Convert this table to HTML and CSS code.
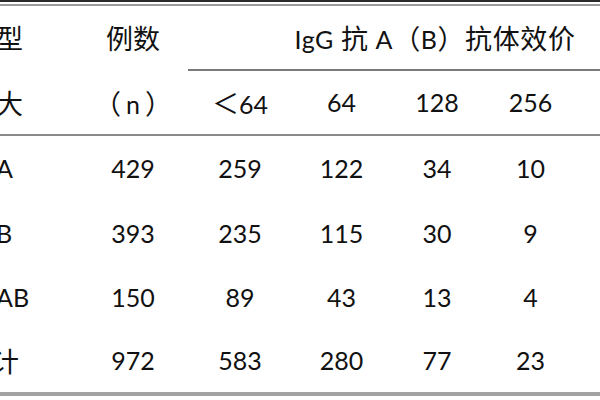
FILE: index.html
```html
<!DOCTYPE html>
<html lang="zh-CN">
<head>
<meta charset="utf-8">
<title>IgG 抗体效价</title>
<link rel="stylesheet" href="styles.css">
</head>
<body>
<div class="sheet">
  <div class="rule-top"></div>
  <div class="grid head">
    <div class="cell c0 r1"><span class="cjk">型</span></div>
    <div class="cell r1"><span class="cjk">例数</span></div>
    <div class="cell title r1"><span class="txt">IgG <span class="cjk">抗</span> A<span class="cjk">（</span>B<span class="cjk">）抗体效价</span></span></div>
    <div class="subrule"></div>
    <div class="cell c0 r3"><span class="cjk">大</span></div>
    <div class="cell r3"><span class="txt"><span class="cjk">（</span><span class="n">n</span><span class="cjk">）</span></span></div>
    <div class="cell r3"><span class="txt"><span class="cjk">＜</span>64</span></div>
    <div class="cell r3">64</div>
    <div class="cell r3">128</div>
    <div class="cell r3">256</div>
  </div>
  <div class="grid body">
    <div class="cell c0">A</div>
    <div class="cell">429</div>
    <div class="cell">259</div>
    <div class="cell">122</div>
    <div class="cell">34</div>
    <div class="cell">10</div>
    <div class="gap"></div>

    <div class="cell c0">B</div>
    <div class="cell">393</div>
    <div class="cell">235</div>
    <div class="cell">115</div>
    <div class="cell">30</div>
    <div class="cell">9</div>
    <div class="gap"></div>

    <div class="cell c0">AB</div>
    <div class="cell">150</div>
    <div class="cell">89</div>
    <div class="cell">43</div>
    <div class="cell">13</div>
    <div class="cell">4</div>
    <div class="gap"></div>

    <div class="cell c0 cut"><span class="cjk">计</span></div>
    <div class="cell">972</div>
    <div class="cell">583</div>
    <div class="cell">280</div>
    <div class="cell">77</div>
    <div class="cell">23</div>
    <div class="gap"></div>
  </div>
</div>
</body>
</html>
```
FILE: styles.css
```css
html, body {
  margin: 0;
  padding: 0;
  background: #ffffff;
}

.sheet {
  width: 600px;
  height: 400px;
  overflow: hidden;
  background: #ffffff;
  color: #111111;
  font-family: Lato, "Noto Sans CJK SC", sans-serif;
  font-size: 25px;
  line-height: 1;
}

.cjk {
  font-family: "Noto Sans CJK SC", sans-serif;
  font-size: 27px;
  font-weight: 400;
}

.n {
  margin: 0 5px;
}

.rule-top {
  height: 2px;
  border-top: 2px solid #2b2b2b;
  border-bottom: 2px solid #9c9c9c;
}

.grid {
  display: grid;
  grid-template-columns: 78px 110px 104px 99px 92px 95px 22px;
}

.head {
  grid-template-rows: 63px 2px 63px;
  border-bottom: 2px solid #8a8a8a;
}

.body {
  grid-template-rows: 65px 64px 64px 63px;
  border-bottom: 4px solid #a2a2a2;
}

.r1 { grid-row: 1; }
.r3 { grid-row: 3; }

.cell {
  display: flex;
  align-items: center;
  justify-content: center;
  white-space: nowrap;
}

.c0 {
  justify-content: flex-start;
  margin-left: -4px;
}

.c0.cut {
  margin-left: -8px;
}

.title {
  grid-column: 4 / 7;
  justify-content: center;
  letter-spacing: 0.6px;
}

.head .c0.r1 { grid-column: 1; }
.head .c0.r3 { grid-column: 1; }

.subrule {
  grid-column: 3 / 8;
  grid-row: 2;
  background: #7a7a7a;
}
```
